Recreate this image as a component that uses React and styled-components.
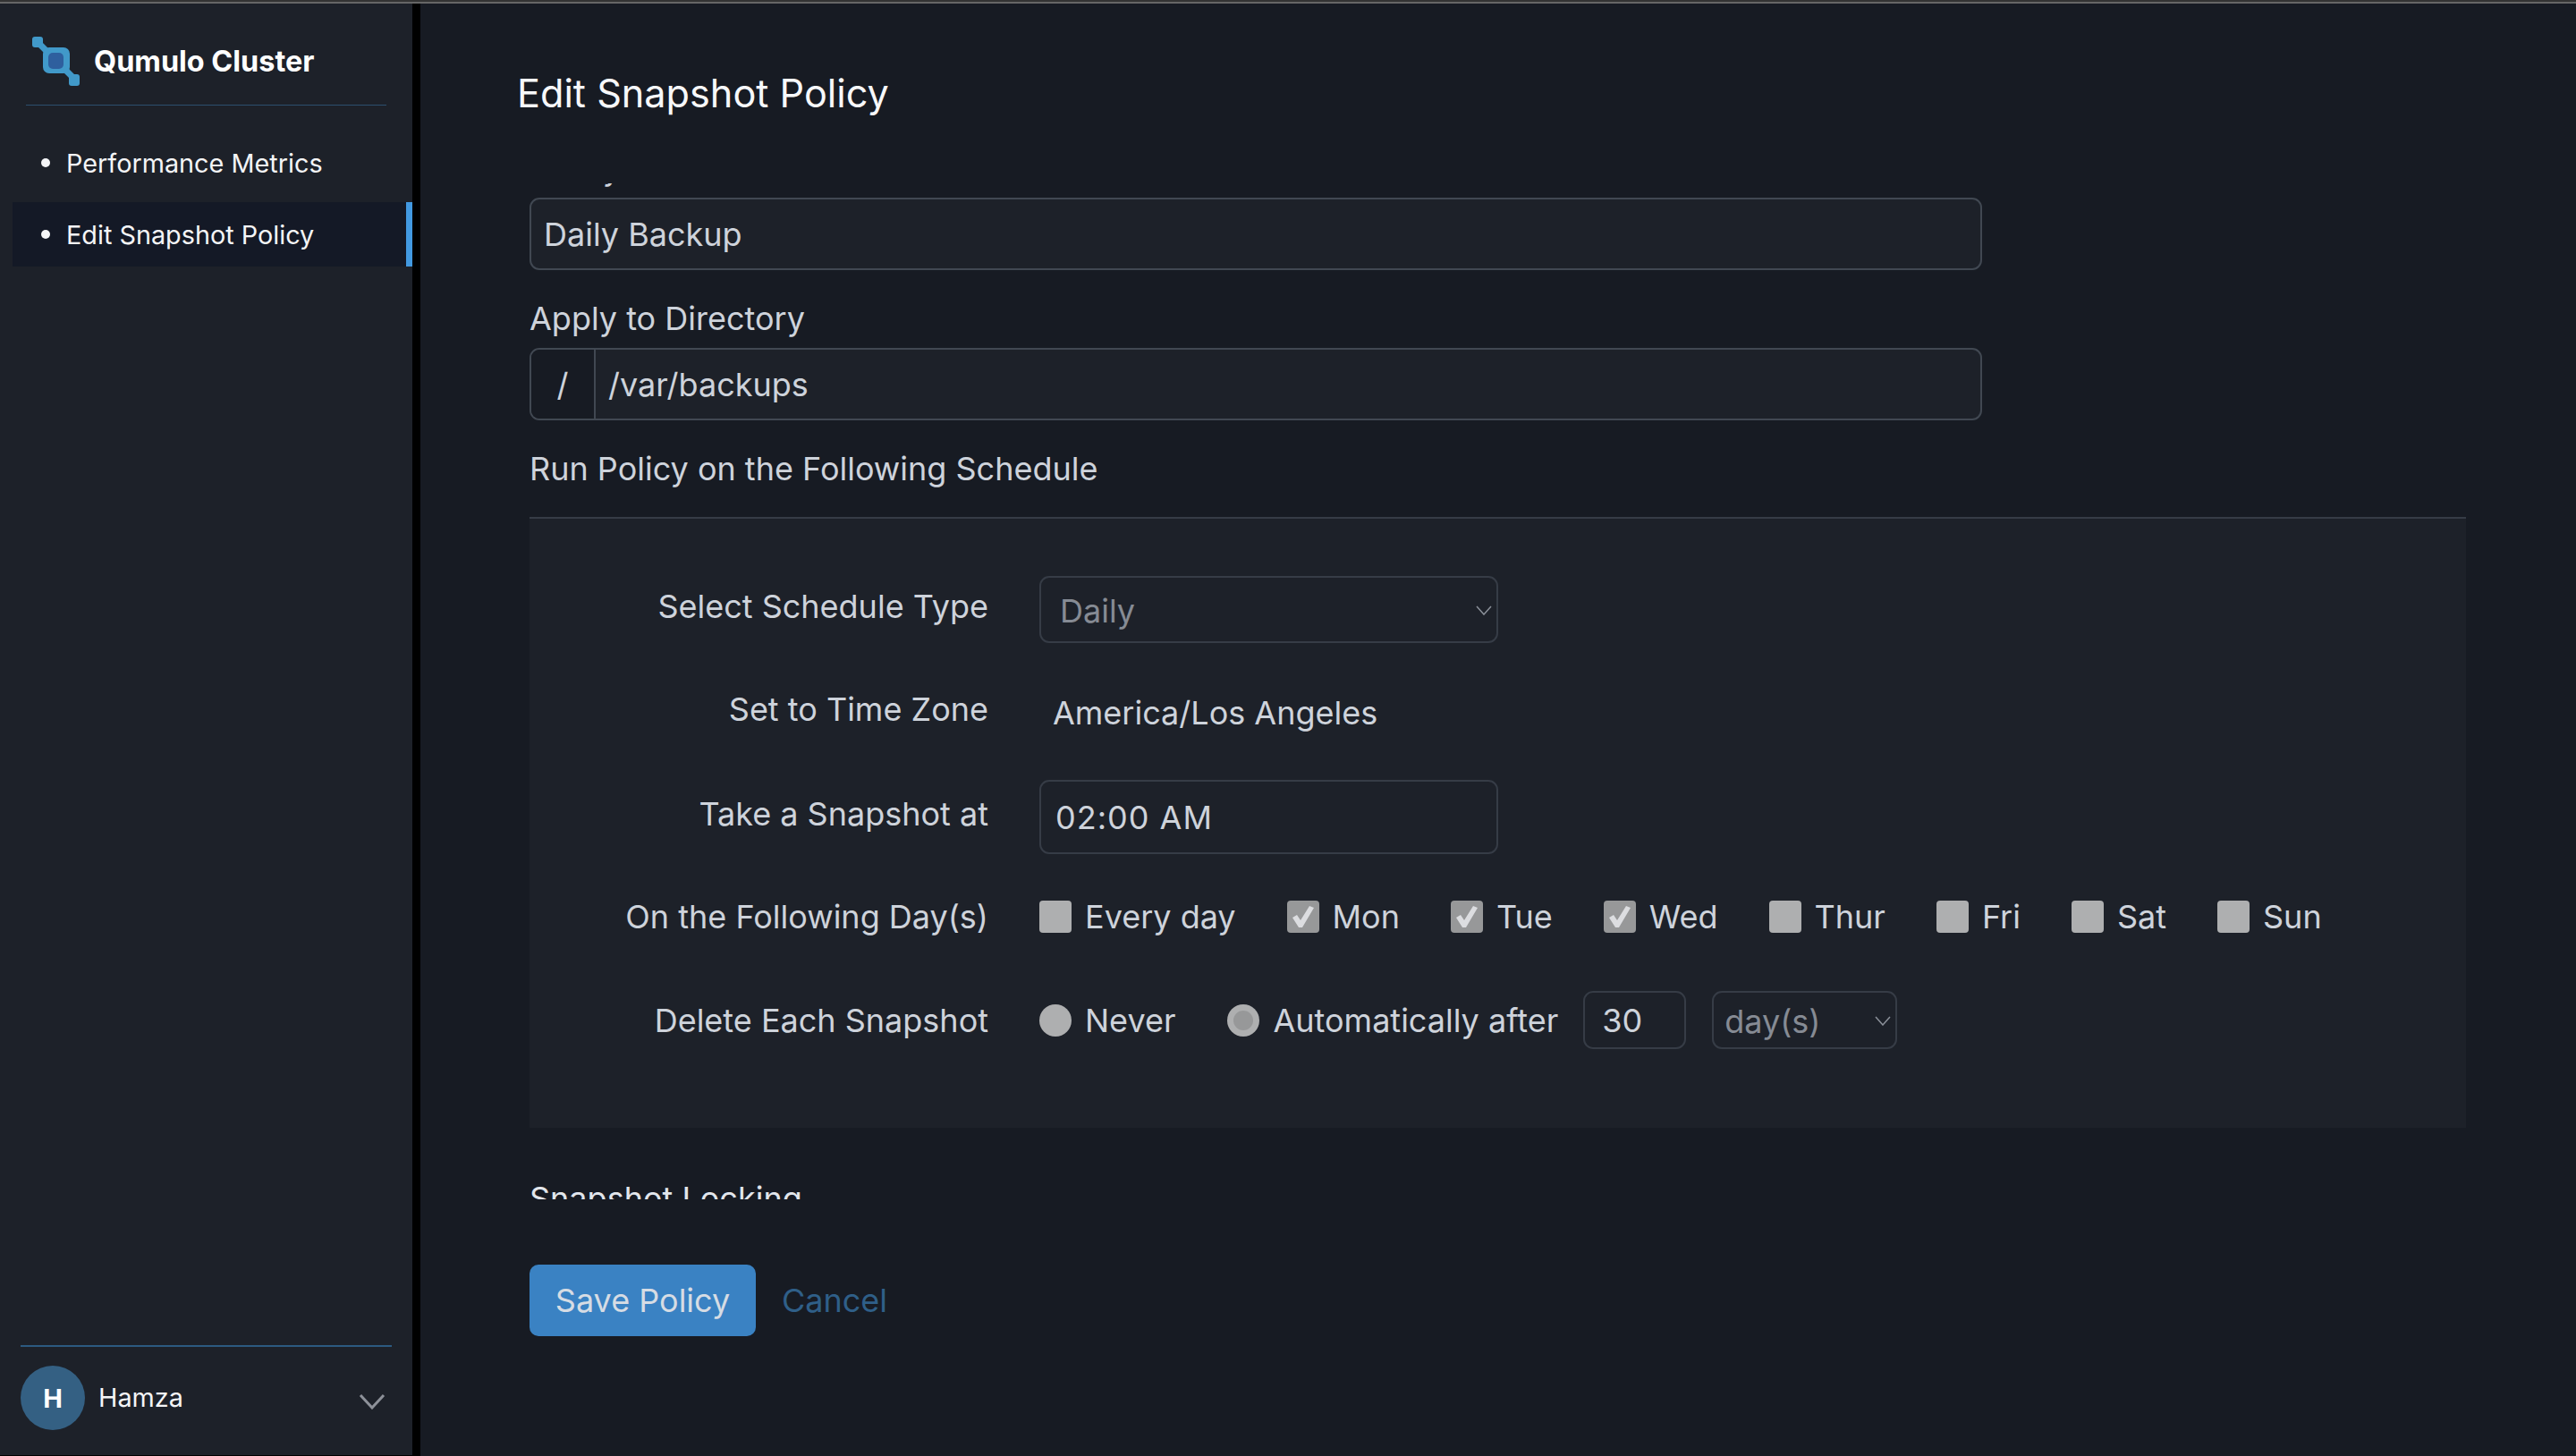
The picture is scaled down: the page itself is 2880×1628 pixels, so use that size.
import React from "react";
import styled, { createGlobalStyle } from "styled-components";

const GlobalStyle = createGlobalStyle`
  html, body {
    margin: 0;
    padding: 0;
    background: #171b23;
  }
  * {
    box-sizing: border-box;
  }
`;

const Page = styled.div`
  width: 2880px;
  height: 1628px;
  display: flex;
  flex-direction: column;
  overflow: hidden;
  font-family: Inter, "Liberation Sans", sans-serif;
  background: #171b23;
`;

const TopLine = styled.div`
  height: 4px;
  flex: none;
  background: #666;
  border-top: 2px solid #333;
`;

const Shell = styled.div`
  flex: 1;
  display: flex;
  min-height: 0;
`;

const Sidebar = styled.aside`
  width: 470px;
  flex: none;
  display: flex;
  flex-direction: column;
  background: #1d2129;
  border-right: 9px solid #000;
  border-bottom: 1px solid #000;
`;

const Brand = styled.div`
  height: 114px;
  margin: 0 29px;
  padding: 37px 0 0 7px;
  display: flex;
  align-items: flex-start;
  gap: 15px;
  border-bottom: 1px solid #2c4f6e;
`;

const BrandName = styled.span`
  padding-top: 2px;
  font-size: 32.4px;
  line-height: 52px;
  font-weight: 700;
  color: #fff;
`;

const Nav = styled.nav`
  margin-top: 28px;
  padding-left: 14px;
  display: flex;
  flex-direction: column;
  gap: 8px;
`;

const NavItem = styled.div`
  height: 72px;
  padding-left: 32px;
  display: flex;
  align-items: center;
  gap: 18px;
  font-size: 28.8px;
  color: #f4f5f7;
  background: ${(props) => (props.$active ? "#141926" : "transparent")};
  border-right: 7px solid ${(props) => (props.$active ? "#4299e1" : "transparent")};
`;

const Bullet = styled.span`
  width: 10px;
  height: 10px;
  border-radius: 50%;
  background: #f4f5f7;
`;

const UserBox = styled.div`
  margin: auto 23px 0;
  height: 123px;
  padding-top: 21px;
  display: flex;
  align-items: flex-start;
  border-top: 2px solid #2c5a80;
`;

const Avatar = styled.div`
  width: 72px;
  height: 72px;
  flex: none;
  border-radius: 50%;
  display: flex;
  align-items: center;
  justify-content: center;
  background: #346083;
  color: #fff;
  font-size: 29px;
  font-weight: 700;
`;

const UserName = styled.span`
  margin-left: 15px;
  font-size: 28.8px;
  line-height: 72px;
  color: #f4f5f7;
`;

const UserChevron = styled.svg`
  width: 30px;
  height: 18px;
  margin: 31px 7px 0 auto;
`;

const Main = styled.main`
  flex: 1;
  min-width: 0;
`;

const Title = styled.h1`
  margin: 0;
  padding: 74px 0 0 108px;
  height: 201px;
  font-size: 43.2px;
  line-height: 52px;
  font-weight: 400;
  color: #f7f8fa;
`;

const Scroller = styled.div`
  width: 2165px;
  height: 1136px;
  margin-left: 122px;
  overflow: hidden;
`;

const ScrollInner = styled.div`
  margin-top: -41px;
`;

const FieldLabel = styled.div`
  height: 48px;
  margin-top: ${(props) => props.$top || 0}px;
  margin-bottom: ${(props) => props.$bottom || 0}px;
  font-size: 36px;
  line-height: 48px;
  color: #ced3db;
`;

const TextBox = styled.div`
  width: 1624px;
  height: 81px;
  display: flex;
  background: #1d2129;
  border: 2px solid #414852;
  border-radius: 11px;
  overflow: hidden;
`;

const Prefix = styled.div`
  width: 72px;
  flex: none;
  display: flex;
  align-items: center;
  justify-content: center;
  background: #171b23;
  border-right: 2px solid #414852;
  font-size: 36px;
  color: #ced3db;
`;

const TextInput = styled.input`
  flex: 1;
  min-width: 0;
  padding: 0 14px;
  border: 0;
  outline: 0;
  background: transparent;
  font: inherit;
  font-size: 36px;
  color: #ced3db;
`;

const Panel = styled.section`
  height: 683px;
  margin-top: 30px;
  padding-top: 64px;
  background: #1d2129;
  border-top: 2px solid #363c46;
`;

const Row = styled.div`
  display: flex;
  align-items: center;
  height: ${(props) => props.$height}px;
  margin-top: ${(props) => props.$top || 0}px;
`;

const RowLabel = styled.label`
  width: 513px;
  flex: none;
  margin-right: 57px;
  padding-bottom: ${(props) => (props.$raised ? 7 : 0)}px;
  text-align: right;
  font-size: 36px;
  line-height: 48px;
  color: #ced3db;
`;

const SelectWrap = styled.div`
  position: relative;
  width: ${(props) => props.$width}px;
  height: 100%;
  margin-left: ${(props) => props.$left || 0}px;
`;

const Select = styled.select`
  width: 100%;
  height: 100%;
  padding: 2px 0 0 ${(props) => props.$pad}px;
  appearance: none;
  background: transparent;
  border: 2px solid #363c46;
  border-radius: 11px;
  font-family: inherit;
  font-size: 36px;
  color: #868b94;
`;

const SelectChevron = styled.svg`
  position: absolute;
  right: 7px;
  top: 50%;
  width: 18px;
  height: 11px;
  margin-top: -5px;
`;

const TimeZone = styled.span`
  padding: 1px 0 0 15px;
  font-size: 36px;
  color: #ced3db;
`;

const TimeInput = styled.input`
  width: 513px;
  height: 100%;
  padding: 0 16px;
  background: transparent;
  border: 2px solid #363c46;
  border-radius: 11px;
  outline: 0;
  font-family: inherit;
  font-size: 36px;
  letter-spacing: 1px;
  color: #ced3db;
`;

const Options = styled.div`
  display: flex;
  align-items: center;
  height: 100%;
  gap: ${(props) => props.$gap}px;
`;

const Option = styled.label`
  display: flex;
  align-items: center;
  gap: 15px;
  font-size: 36px;
  color: #ced3db;
`;

const CheckBox = styled.span`
  width: 36px;
  height: 36px;
  display: flex;
  align-items: center;
  justify-content: center;
  border-radius: 4px;
  background: ${(props) => (props.$checked ? "#979899" : "#aeafb0")};
`;

const Radio = styled.span`
  width: 36px;
  height: 36px;
  display: flex;
  align-items: center;
  justify-content: center;
  border-radius: 50%;
  background: #aeafb0;
`;

const RadioDot = styled.span`
  width: 22px;
  height: 22px;
  border-radius: 50%;
  background: #979899;
`;

const NumberInput = styled.input`
  width: 115px;
  height: 65px;
  margin-left: -30px;
  padding: 0 19px;
  background: transparent;
  border: 2px solid #363c46;
  border-radius: 11px;
  outline: 0;
  font-family: inherit;
  font-size: 36px;
  color: #ced3db;
`;

const SectionTitle = styled.div`
  margin-top: 55px;
  font-size: 36px;
  line-height: 48px;
  color: #e2e6ec;
`;

const Actions = styled.div`
  margin: 73px 0 0 122px;
  display: flex;
  align-items: center;
  gap: 29px;
`;

const SaveButton = styled.button`
  width: 253px;
  height: 80px;
  border: 0;
  border-radius: 10px;
  background: #3a82c3;
  font-family: inherit;
  font-size: 36px;
  color: #d6dce4;
`;

const CancelLink = styled.a`
  font-size: 36px;
  color: #2f5f88;
`;

const Logo = () => (
  <svg width="54" height="55" viewBox="0 0 54 55">
    <path d="M6 6 L20 20 M34 34 L48 48" stroke="#4199c9" strokeWidth="7" />
    <rect x="0" y="0" width="12" height="12" rx="3" fill="#4199c9" />
    <rect x="41" y="42" width="12" height="13" rx="3" fill="#4199c9" />
    <rect x="12" y="12" width="30" height="29" rx="7" fill="#4199c9" />
    <rect x="18" y="18" width="17" height="18" rx="5" fill="#2e5f9e" />
  </svg>
);

const Chevron = () => (
  <SelectChevron viewBox="0 0 18 11">
    <path d="M1 1 L9 10 L17 1" fill="none" stroke="#8b9099" strokeWidth="1.5" />
  </SelectChevron>
);

const Check = () => (
  <svg width="26" height="25" viewBox="0 0 26 25">
    <polygon points="1,13 6,10 10,16 20,0 25,2 12,24 8,24" fill="#dcdde0" />
  </svg>
);

const days = [
  { name: "Every day" },
  { name: "Mon", checked: true },
  { name: "Tue", checked: true },
  { name: "Wed", checked: true },
  { name: "Thur" },
  { name: "Fri" },
  { name: "Sat" },
  { name: "Sun" },
];

const App = () => {
  return (
    <Page>
      <GlobalStyle />
      <TopLine />
      <Shell>
        <Sidebar>
          <Brand>
            <Logo />
            <BrandName>Qumulo Cluster</BrandName>
          </Brand>
          <Nav>
            <NavItem>
              <Bullet />
              Performance Metrics
            </NavItem>
            <NavItem $active>
              <Bullet />
              Edit Snapshot Policy
            </NavItem>
          </Nav>
          <UserBox>
            <Avatar>H</Avatar>
            <UserName>Hamza</UserName>
            <UserChevron viewBox="0 0 30 18">
              <path d="M2 2 L15 16 L28 2" fill="none" stroke="#8d9199" strokeWidth="3" />
            </UserChevron>
          </UserBox>
        </Sidebar>
        <Main>
          <Title>Edit Snapshot Policy</Title>
          <Scroller>
            <ScrollInner>
              <FieldLabel $bottom={9}>Policy Name</FieldLabel>
              <TextBox>
                <TextInput readOnly value="Daily Backup" />
              </TextBox>
              <FieldLabel $top={30} $bottom={9}>
                Apply to Directory
              </FieldLabel>
              <TextBox>
                <Prefix>/</Prefix>
                <TextInput readOnly value="/var/backups" />
              </TextBox>
              <FieldLabel $top={30}>Run Policy on the Following Schedule</FieldLabel>
              <Panel>
                <Row $height={75}>
                  <RowLabel $raised>Select Schedule Type</RowLabel>
                  <SelectWrap $width={513}>
                    <Select $pad={21} defaultValue="Daily">
                      <option>Daily</option>
                    </Select>
                    <Chevron />
                  </SelectWrap>
                </Row>
                <Row $height={75} $top={40}>
                  <RowLabel $raised>Set to Time Zone</RowLabel>
                  <TimeZone>America/Los Angeles</TimeZone>
                </Row>
                <Row $height={83} $top={38}>
                  <RowLabel $raised>Take a Snapshot at</RowLabel>
                  <TimeInput readOnly value="02:00 AM" />
                </Row>
                <Row $height={36} $top={52}>
                  <RowLabel>On the Following Day(s)</RowLabel>
                  <Options $gap={57}>
                    {days.map((day) => (
                      <Option key={day.name}>
                        <CheckBox $checked={day.checked}>{day.checked && <Check />}</CheckBox>
                        {day.name}
                      </Option>
                    ))}
                  </Options>
                </Row>
                <Row $height={65} $top={65}>
                  <RowLabel>Delete Each Snapshot</RowLabel>
                  <Options $gap={58}>
                    <Option>
                      <Radio />
                      Never
                    </Option>
                    <Option>
                      <Radio>
                        <RadioDot />
                      </Radio>
                      Automatically after
                    </Option>
                    <NumberInput readOnly value="30" />
                  </Options>
                  <SelectWrap $width={207} $left={29}>
                    <Select $pad={12} defaultValue="day(s)">
                      <option>day(s)</option>
                    </Select>
                    <Chevron />
                  </SelectWrap>
                </Row>
              </Panel>
              <SectionTitle>Snapshot Locking</SectionTitle>
            </ScrollInner>
          </Scroller>
          <Actions>
            <SaveButton>Save Policy</SaveButton>
            <CancelLink>Cancel</CancelLink>
          </Actions>
        </Main>
      </Shell>
    </Page>
  );
};

export default App;
